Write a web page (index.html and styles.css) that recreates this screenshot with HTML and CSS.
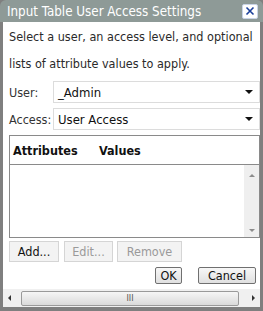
FILE: index.html
```html
<!DOCTYPE html>
<html>
<head>
<meta charset="utf-8">
<link rel="stylesheet" href="styles.css">
</head>
<body>
<div class="dialog">
  <div class="titlebar">
    <span class="title">Input Table User Access Settings</span>
    <span class="close"><svg width="12" height="12" viewBox="0 0 12 12"><path d="M2.5 2.5L9.5 9.5M9.5 2.5L2.5 9.5" stroke="#1a3f9a" stroke-width="1.6"/></svg></span>
  </div>
  <div class="content">
    <p class="intro">Select a user, an access level, and optional lists of attribute values to apply.</p>
    <div class="field">
      <span class="label">User:</span>
      <div class="select"><span>_Admin</span><span class="caret"></span></div>
    </div>
    <div class="field">
      <span class="label">Access:</span>
      <div class="select"><span>User Access</span><span class="caret"></span></div>
    </div>
    <div class="table">
      <div class="thead"><span class="col1">Attributes</span><span>Values</span></div>
      <div class="tbody">
        <div class="rows"></div>
        <div class="vscroll">
          <span class="arr up"></span>
          <span class="arr down"></span>
        </div>
      </div>
    </div>
    <div class="btnrow">
      <button class="btn">Add...</button>
      <button class="btn disabled">Edit...</button>
      <button class="btn disabled">Remove</button>
    </div>
    <div class="okrow">
      <button class="btn2 ok">OK</button>
      <button class="btn2 cancel">Cancel</button>
    </div>
  </div>
  <div class="hscroll">
    <span class="harr left"></span>
    <div class="thumb"><span class="grip">III</span></div>
    <span class="harr right"></span>
  </div>
</div>
</body>
</html>
```
FILE: styles.css
```css
* { box-sizing: border-box; }
html, body { margin: 0; padding: 0; }
body { width: 263px; height: 311px; background: #808080; font-family: "DejaVu Sans Condensed", "DejaVu Sans", sans-serif; font-size: 12px; color: #222; overflow: hidden; }
.dialog { width: 263px; height: 311px; padding: 0 3px 4px 3px; background: #7f7f7f; display: flex; flex-direction: column; border-radius: 5px 5px 0 0; }
.titlebar { height: 22px; flex: none; margin: 0 -3px; padding: 0 5px 0 7px; background: #8e9a97; border-radius: 6px 6px 0 0; display: flex; align-items: center; justify-content: space-between; }
.title { color: #fff; font-size: 13.3px; }
.close { width: 16px; height: 15px; background: #fff; border: 1px solid #c9d4e6; border-radius: 2px; display: flex; align-items: center; justify-content: center; }
.content { background: #fff; flex: 1; padding: 0 0 0 6px; display: flex; flex-direction: column; }
.intro { margin: 0; padding-top: 1px; line-height: 27px; font-size: 12.5px; color: #2a2a2a; }
.field { display: flex; align-items: center; margin-top: 4px; height: 22px; }
.field + .field { margin-top: 5px; }
.label { width: 44px; color: #333; font-size: 12.5px; }
.select { flex: 1; height: 22px; border: 1px solid #dcdcdc; display: flex; align-items: center; justify-content: space-between; padding: 0 6px 0 4px; font-size: 13px; color: #111; }
.caret { width: 0; height: 0; border-left: 4px solid transparent; border-right: 4px solid transparent; border-top: 4px solid #111; }
.table { margin-top: 5px; margin-right: 0; border: 1px solid #8a8a8a; height: 103px; display: flex; flex-direction: column; }
.thead { height: 29px; flex: none; border-bottom: 1px solid #8a8a8a; display: flex; align-items: center; padding-left: 3px; font-weight: bold; font-size: 12.5px; color: #111; }
.col1 { width: 86px; }
.tbody { flex: 1; display: flex; }
.rows { flex: 1; }
.vscroll { width: 15px; background: #efefef; display: flex; flex-direction: column; justify-content: space-between; align-items: center; padding: 9px 0 5px; }
.arr { width: 0; height: 0; border-left: 3px solid transparent; border-right: 3px solid transparent; }
.arr.up { border-bottom: 3px solid #8c8c8c; }
.arr.down { border-top: 3px solid #8c8c8c; }
.btnrow { display: flex; gap: 5px; margin-top: 3px; }
.btn { font-family: inherit; font-size: 12.5px; height: 21px; padding: 0; border: 1px solid #d5d5d5; background: #f3f3f3; color: #111; margin: 0; }
.btnrow .btn:nth-child(1) { width: 50px; }
.btnrow .btn:nth-child(2) { width: 49px; }
.btnrow .btn:nth-child(3) { width: 65px; margin-left: -1px; }
.btn.disabled { color: #9a9a9a; }
.okrow { display: flex; justify-content: flex-end; gap: 16px; margin-top: 5px; padding-right: 4px; }
.btn2 { font-family: inherit; font-size: 12.5px; height: 17px; padding: 0; border: 1px solid #707070; border-radius: 2px; background: linear-gradient(#f7f7f7, #e0e0e0); color: #111; line-height: 13px; margin: 0; }
.btn2.ok { width: 27px; }
.btn2.cancel { width: 58px; }
.hscroll { height: 18px; flex: none; background: #f0f0f0; display: flex; align-items: center; padding: 0 5px 0 5px; gap: 0; }
.harr { width: 0; height: 0; border-top: 3px solid transparent; border-bottom: 3px solid transparent; }
.harr.left { border-right: 3px solid #333; margin-right: 10px; }
.harr.right { border-left: 3px solid #333; margin-left: 13px; }
.thumb { flex: 1; height: 15px; border: 1px solid #9a9a9a; border-radius: 2px; background: linear-gradient(#f6f6f6, #dadada); display: flex; align-items: center; justify-content: center; }
.grip { font-size: 8px; color: #555; font-family: "DejaVu Sans", sans-serif; }
```
